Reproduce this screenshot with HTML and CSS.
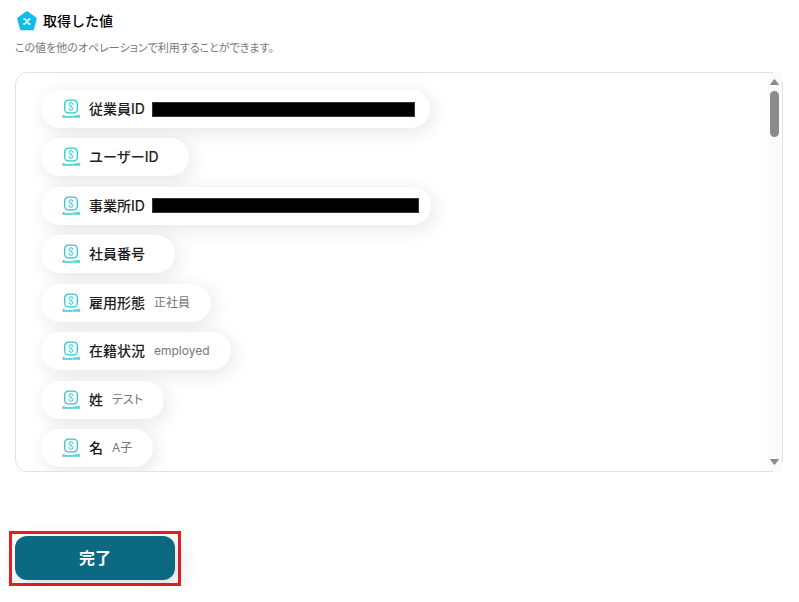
FILE: index.html
```
<!DOCTYPE html>
<html lang="ja">
<head>
  <meta charset="UTF-8">
  <meta name="viewport" content="width=device-width, initial-scale=1.0">
  <title>取得した値</title>
  <link rel="stylesheet" href="styles.css">
</head>
<body>
  <svg class="defs" width="0" height="0" aria-hidden="true">
    <symbol id="smarthr" viewBox="0 0 20 20">
      <rect x="3.7" y="1.2" width="12.6" height="12.6" rx="3.6" fill="none" stroke="#2bc8cf" stroke-width="1.3"/>
      <path d="M11.8 6.2V5.5a1.8 1.8 0 0 0-3.6 0v.9c0 1.2 3.6 1 3.6 2.2v.9a1.8 1.8 0 0 1-3.6 0v-.7M10 5.6v1M10 8.4v1" fill="none" stroke="#2bc8cf" stroke-width="1"/>
    </symbol>
  </svg>

  <main class="page">
    <header class="heading">
      <svg class="heading-icon" width="20" height="20" viewBox="0 0 20 20" aria-hidden="true">
        <path d="M10 1.8L18.2 7.8L15.6 17.8H4.4L1.8 7.8Z" fill="#10bcec" stroke="#10bcec" stroke-width="3" stroke-linejoin="round"/>
        <path d="M6.3 7.9H8L11.8 13H13.6M13.4 7.9H12.4L7.6 13H6.4" fill="none" stroke="#fff" stroke-width="1.5"/>
      </svg>
      <h1>取得した値</h1>
    </header>
    <p class="description">この値を他のオペレーションで利用することができます。</p>

    <section class="panel">
      <ul class="values">
        <li class="chip"><svg class="logo"><use href="#smarthr"/><text x="10" y="19" class="logo-text">SmartHR</text></svg><span class="name">従業員ID</span><span class="mask"></span></li>
        <li class="chip"><svg class="logo"><use href="#smarthr"/><text x="10" y="19" class="logo-text">SmartHR</text></svg><span class="name">ユーザーID</span><span class="sample"></span></li>
        <li class="chip"><svg class="logo"><use href="#smarthr"/><text x="10" y="19" class="logo-text">SmartHR</text></svg><span class="name">事業所ID</span><span class="mask mask-long"></span></li>
        <li class="chip"><svg class="logo"><use href="#smarthr"/><text x="10" y="19" class="logo-text">SmartHR</text></svg><span class="name">社員番号</span><span class="sample"></span></li>
        <li class="chip"><svg class="logo"><use href="#smarthr"/><text x="10" y="19" class="logo-text">SmartHR</text></svg><span class="name">雇用形態</span><span class="sample">正社員</span></li>
        <li class="chip"><svg class="logo"><use href="#smarthr"/><text x="10" y="19" class="logo-text">SmartHR</text></svg><span class="name">在籍状況</span><span class="sample">employed</span></li>
        <li class="chip"><svg class="logo"><use href="#smarthr"/><text x="10" y="19" class="logo-text">SmartHR</text></svg><span class="name">姓</span><span class="sample">テスト</span></li>
        <li class="chip"><svg class="logo"><use href="#smarthr"/><text x="10" y="19" class="logo-text">SmartHR</text></svg><span class="name">名</span><span class="sample">A子</span></li>
      </ul>
      <div class="scrollbar" aria-hidden="true">
        <svg width="9" height="6" viewBox="0 0 9 6"><path d="M4.5 0.5L8.5 5.5H0.5Z" fill="#8b8b8b" stroke="#8b8b8b" stroke-linejoin="round"/></svg>
        <span class="thumb"></span>
        <svg class="down" width="9" height="6" viewBox="0 0 9 6"><path d="M4.5 5.5L0.5 0.5H8.5Z" fill="#8b8b8b" stroke="#8b8b8b" stroke-linejoin="round"/></svg>
      </div>
    </section>

    <div class="highlight">
      <button type="button" class="done">完了</button>
    </div>
  </main>
</body>
</html>
```

FILE: styles.css
```
* {
  box-sizing: border-box;
}
body {
  margin: 0;
  background: #fff;
  color: #1c1c1c;
  font-family: Inter, "Noto Sans CJK JP", sans-serif;
}
.defs {
  position: absolute;
}
.page {
  padding: 10px 16px 0 15px;
}
.heading {
  display: flex;
  align-items: center;
  gap: 6px;
  padding-left: 2px;
  height: 22px;
}
h1 {
  margin: 0;
  font-size: 14px;
  font-weight: 500;
  line-height: 20px;
  color: #000;
}
.description {
  margin: 6px 0 14px;
  font-size: 11px;
  line-height: 20px;
  color: #777;
  font-feature-settings: "palt";
}
.panel {
  display: flex;
  height: 400px;
  border: 1px solid #e2e2e2;
  border-radius: 12px;
}
.values {
  flex: 1;
  display: flex;
  flex-direction: column;
  align-items: flex-start;
  justify-content: space-between;
  margin: 0;
  padding: 17px 25px 4px;
  border-radius: 11px 0 0 11px;
  overflow: hidden;
  list-style: none;
}
.chip {
  display: flex;
  align-items: center;
  height: 38px;
  padding: 0 21px 0 20px;
  border-radius: 19px;
  background: #fff;
  box-shadow: 3px 4px 20px rgba(0, 0, 0, 0.1);
}
.logo {
  width: 20px;
  height: 20px;
}
.logo-text {
  font: 700 4px "Noto Sans", sans-serif;
  text-anchor: middle;
  fill: #2bc8cf;
  stroke: #2bc8cf;
  stroke-width: 0.2px;
}
.name {
  margin-left: 8px;
  font-size: 14px;
  font-weight: 500;
  line-height: 20px;
}
.sample {
  margin-left: 9px;
  font-size: 12px;
  line-height: 20px;
  color: #777;
  font-feature-settings: "palt";
}
.mask {
  width: 263px;
  height: 15px;
  margin: 0 -6px 0 7px;
  border: 1px solid #333;
  background: #000;
}
.mask-long {
  width: 267px;
  margin-right: -9px;
}
.scrollbar {
  display: flex;
  flex-direction: column;
  align-items: center;
  width: 15px;
  padding: 6px 0;
  background: #fbfbfb;
}
.thumb {
  width: 9px;
  height: 46px;
  margin-top: 6px;
  border-radius: 5px;
  background: #8b8b8b;
}
.down {
  margin-top: auto;
}
.highlight {
  width: 172px;
  margin: 59px 0 0 -6px;
  padding: 2px 3px 3px;
  border: 3px solid #e81e20;
}
.done {
  display: block;
  width: 100%;
  height: 44px;
  padding: 0 0 2px;
  border: 0;
  border-radius: 12px;
  background: #0b6982;
  color: #fff;
  font-family: inherit;
  font-size: 16px;
  font-weight: 700;
  box-shadow: 4px 6px 20px rgba(30, 50, 80, 0.18);
  cursor: pointer;
}
```
